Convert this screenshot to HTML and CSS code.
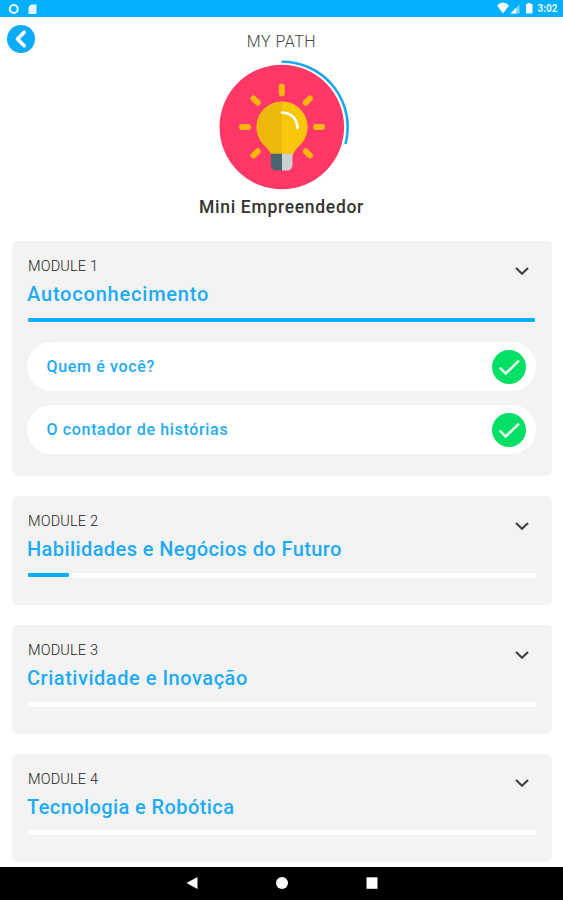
FILE: index.html
```html
<!DOCTYPE html>
<html lang="pt">
<head>
<meta charset="utf-8">
<title>My Path</title>
<link rel="stylesheet" href="styles.css">
</head>
<body>
<div class="screen">
  <div class="status">
    <svg width="40" height="16" viewBox="0 0 40 16"><circle cx="13.8" cy="9" r="4" fill="none" stroke="#e4f6ff" stroke-width="2.2"/><path d="M31 4.500h5.500v9.500h-8V7z" fill="#e4f6ff"/></svg>
    <div class="status-right">
      <svg width="40" height="16" viewBox="0 0 40 16"><path d="M0 5.500Q6-.5 12 5.500L6 13.500z" fill="#fff"/><path d="M13.500 13.500h9V4.500z" fill="#7fd6ff"/><path d="M13.500 13.500h5.500V8z" fill="#fff"/><path d="M29 4h1.500V3h3v1H35.500v9.500H29z" fill="#fff"/></svg>
      <span class="clock">3:02</span>
    </div>
  </div>
  <header class="top">
    <svg class="back" width="28" height="28" viewBox="0 0 28 28"><circle cx="14" cy="14" r="14" fill="#0cabf8"/><path d="M17.200 7.200L10.500 14l6.700 6.800" fill="none" stroke="#fff" stroke-width="3.600" stroke-linecap="round" stroke-linejoin="round"/></svg>
    <h1 class="heading">MY PATH</h1>
  </header>
  <div class="hero">
    <svg width="140" height="136" viewBox="212 59 140 136">
      <circle cx="281.800" cy="127" r="62.300" fill="#fe3866"/>
      <path d="M281.500 61.700A65.500 65.500 0 0 1 345.500 144" fill="none" stroke="#1aa9ef" stroke-width="2.600"/>
      <g stroke="#fbb60e" stroke-width="6" stroke-linecap="round"><path d="M281.800 86.500v7M242 127h6M316 127h6M253.500 98.500l4.200 4.200M310 98.500l-4.200 4.200M253.500 155.500l4.200-4.200M310 155.500l-4.200-4.200"/></g>
      <path d="M282 101.500a25.500 25.500 0 0 0-18.500 43.200q7 6.300 7.500 10.300h11z" fill="#edb70b"/>
      <path d="M282 101.500a25.500 25.500 0 0 1 18.500 43.200q-7 6.300-7.500 10.300h-11z" fill="#f8c60b"/>
      <path d="M271 153.800h11V170.500h-5q-6 0-6-6z" fill="#496670"/>
      <path d="M282 153.800h10.500V164.500q0 6-6 6H282z" fill="#cbd0d1"/>
      <path d="M282 112.500q14.500 1 15.500 15.500" fill="none" stroke="#fff" stroke-width="2.600" stroke-linecap="round"/>
    </svg>
    <h2 class="path-name">Mini Empreendedor</h2>
  </div>
  <main class="modules">
    <section class="card">
      <div class="label">MODULE 1</div>
      <div class="title wide">Autoconhecimento</div>
      <svg class="chevron" width="16" height="10" viewBox="0 0 16 10"><path d="M2 2l6 5.800L14 2" fill="none" stroke="#444" stroke-width="2.200"/></svg>
      <div class="track"><div class="fill" style="width:99.8%"></div></div>
      <div class="lessons">
        <div class="lesson"><span>Quem é você?</span><svg width="34" height="34" viewBox="0 0 34 34"><circle cx="17" cy="17" r="17" fill="#04df65"/><path d="M7.800 17.500l5.800 6L27 10.600" fill="none" stroke="#e9fff2" stroke-width="2.500"/></svg></div>
        <div class="lesson"><span>O contador de histórias</span><svg width="34" height="34" viewBox="0 0 34 34"><circle cx="17" cy="17" r="17" fill="#04df65"/><path d="M7.800 17.500l5.800 6L27 10.600" fill="none" stroke="#e9fff2" stroke-width="2.500"/></svg></div>
      </div>
    </section>
    <section class="card">
      <div class="label">MODULE 2</div>
      <div class="title">Habilidades e Negócios do Futuro</div>
      <svg class="chevron" width="16" height="10" viewBox="0 0 16 10"><path d="M2 2l6 5.800L14 2" fill="none" stroke="#444" stroke-width="2.200"/></svg>
      <div class="track"><div class="fill" style="width:8%"></div></div>
    </section>
    <section class="card">
      <div class="label">MODULE 3</div>
      <div class="title medium">Criatividade e Inovação</div>
      <svg class="chevron" width="16" height="10" viewBox="0 0 16 10"><path d="M2 2l6 5.800L14 2" fill="none" stroke="#444" stroke-width="2.200"/></svg>
      <div class="track"></div>
    </section>
    <section class="card">
      <div class="label">MODULE 4</div>
      <div class="title">Tecnologia e Robótica</div>
      <svg class="chevron" width="16" height="10" viewBox="0 0 16 10"><path d="M2 2l6 5.800L14 2" fill="none" stroke="#444" stroke-width="2.200"/></svg>
      <div class="track"></div>
    </section>
  </main>
  <nav class="navbar">
    <svg width="14" height="14" viewBox="0 0 14 14"><path d="M1.500 7L12.500 1v12z" fill="#fff"/></svg>
    <svg width="14" height="14" viewBox="0 0 14 14"><circle cx="7" cy="7" r="6" fill="#fff"/></svg>
    <svg width="14" height="14" viewBox="0 0 14 14"><path d="M1.500 1.300h11v11.500h-11z" fill="#fff"/></svg>
  </nav>
</div>
</body>
</html>
```
FILE: styles.css
```css
* { box-sizing: border-box; }
body { margin: 0; background: #fff; font-family: Roboto, "Liberation Sans", sans-serif; }
h1, h2 { margin: 0; }
svg { display: block; flex: none; }
.screen { width: 563px; height: 900px; display: flex; flex-direction: column; overflow: hidden; }
.status { height: 16.500px; flex: none; background: #02b0fe; display: flex; justify-content: space-between; }
.status-right { display: flex; width: 66.500px; }
.clock { color: #e4f6ff; font-size: 10px; font-weight: 700; line-height: 18px; margin-left: 1px; }
.top { height: 42.500px; flex: none; display: grid; grid-template-columns: 28px 1fr 28px; padding: 8px 7px 0; }
.heading { text-align: center; font-size: 16px; font-weight: 300; line-height: 33px; color: #444; letter-spacing: .5px; }
.hero { height: 182px; flex: none; display: flex; flex-direction: column; align-items: center; }
.path-name { font-size: 17.500px; font-weight: 500; line-height: 25px; color: #333; letter-spacing: .7px; }
.modules { flex: 1; min-height: 0; overflow: hidden; padding: 0 11px 0 12px; display: flex; flex-direction: column; gap: 20.300px; }
.card { flex: none; background: #f3f3f3; border-radius: 6px; min-height: 108.500px; padding: 14px 16px 22.500px; display: grid; grid-template-columns: 1fr 22px; align-content: start; grid-template-rows: 22px 36px auto; }
.label { font-size: 14.500px; font-weight: 300; line-height: 24px; color: #222; letter-spacing: .15px; }
.title { grid-row: 2; grid-column: 1; margin-left: -1px; font-size: 20px; font-weight: 500; line-height: 35px; color: #1eabf4; letter-spacing: .41px; }
.title.medium { letter-spacing: .53px; }
.title.wide { letter-spacing: .8px; }
.chevron { grid-row: 1 / 3; grid-column: 2; margin-top: 10.500px; }
.track { grid-column: 1 / 3; height: 5px; background: #fff; margin-top: 4.500px; }
.fill { height: 4.500px; background: #08adfb; border-radius: 1px; }
.lessons { grid-column: 1 / 3; display: flex; flex-direction: column; gap: 14.500px; margin-top: 19.500px; }
.lesson { height: 48.500px; margin: 0 0 0 -1px; border-radius: 25px; background: #fff; display: flex; align-items: center; justify-content: space-between; padding: 1px 10px 0 19.500px; font-size: 16px; font-weight: 500; color: #1eabf4; letter-spacing: .66px; }
.navbar { height: 33.300px; flex: none; background: #000; display: flex; justify-content: center; align-items: center; gap: 76px; }
```
